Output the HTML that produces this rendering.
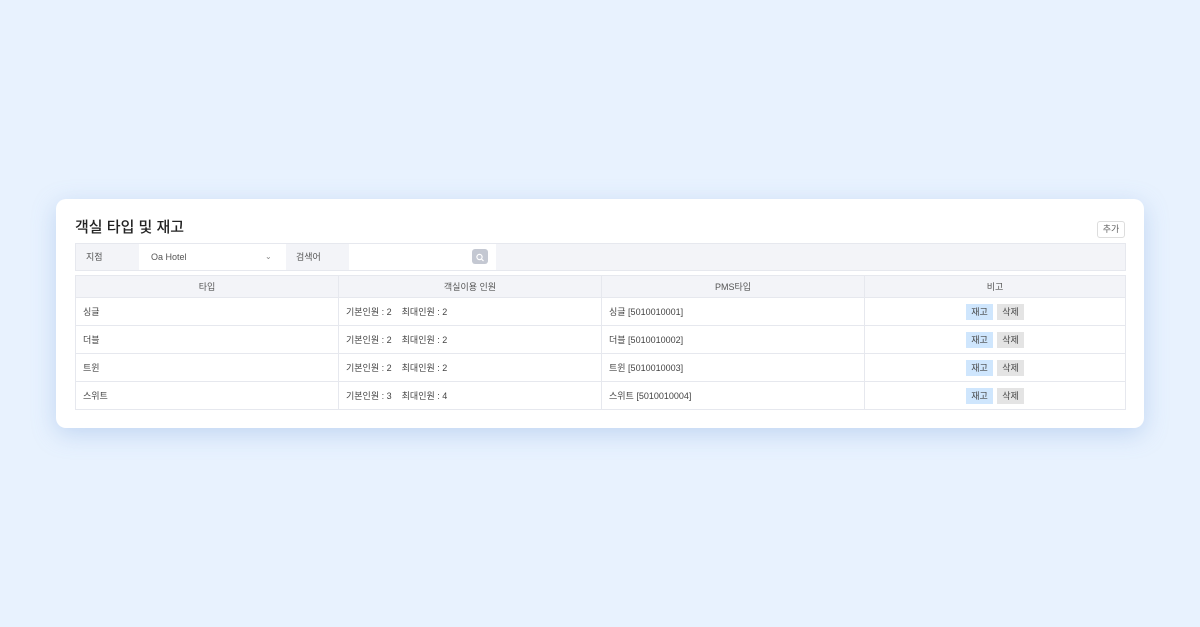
<!DOCTYPE html><html><head><meta charset="utf-8"><style>
*{box-sizing:border-box;margin:0;padding:0}
body{width:1200px;height:627px;background:#e8f2fe;font-family:"Liberation Sans","Noto Sans CJK KR",sans-serif;position:relative;overflow:hidden;color:#333}
.card{position:absolute;left:56px;top:199px;width:1088px;height:229px;background:#fff;border-radius:10px;box-shadow:0 6px 24px rgba(120,160,220,.35)}
h1{position:absolute;left:19px;top:17px;font-size:15px;font-weight:500;color:#222}
.add{position:absolute;left:1041px;top:22px;width:28px;height:17px;border:1px solid #ddd;border-radius:3px;font-size:9px;color:#666;text-align:center;line-height:15px}
.bar{position:absolute;left:19px;top:44px;width:1051px;height:28px;background:#f3f4f8;border:1px solid #e6e8ee;font-size:9px;color:#555}
.bar div{position:absolute;top:0;height:26px;line-height:26px}
table{position:absolute;left:19px;top:76px;width:1051px;border-collapse:collapse;font-size:9px;color:#444}
td,th{border:1px solid #e6e8ee;height:28px;padding:0 7px;text-align:left;font-weight:normal}
th{background:#f3f4f8;height:22px;text-align:center;color:#555}
td.c{text-align:center}
.b{display:inline-block;width:27px;height:16px;line-height:16px;text-align:center;font-size:9px;margin:0 2px}
.b1{background:#cfe6fd}.b2{background:#e4e4e4}
</style></head><body><div class="card">
<h1>객실 타입 및 재고</h1><div class="add">추가</div>
<div class="bar">
<div style="left:10px">지점</div>
<div style="left:63px;width:147px;background:#fff;padding-left:12px">Oa Hotel<span style="position:absolute;left:126px;top:0;color:#888;font-size:8px">⌄</span></div>
<div style="left:220px">검색어</div>
<div style="left:273px;width:147px;background:#fff"><span style="position:absolute;left:123px;top:5px;width:16px;height:15px;background:#c4c8d2;border-radius:3px"><svg width="16" height="15" viewBox="0 0 16 15"><circle cx="7.5" cy="7" r="2.6" fill="none" stroke="#fff" stroke-width="1.2"/><path d="M9.5 9l2 2" stroke="#fff" stroke-width="1.2"/></svg></span></div>
</div>
<table><colgroup><col style="width:263px"><col style="width:263px"><col style="width:263px"><col></colgroup>
<tr><th>타입</th><th>객실이용 인원</th><th>PMS타입</th><th>비고</th></tr>
<tr><td>싱글</td><td>기본인원 : 2 &nbsp;&nbsp; 최대인원 : 2</td><td>싱글 [5010010001]</td><td class="c"><span class="b b1">재고</span><span class="b b2">삭제</span></td></tr>
<tr><td>더블</td><td>기본인원 : 2 &nbsp;&nbsp; 최대인원 : 2</td><td>더블 [5010010002]</td><td class="c"><span class="b b1">재고</span><span class="b b2">삭제</span></td></tr>
<tr><td>트윈</td><td>기본인원 : 2 &nbsp;&nbsp; 최대인원 : 2</td><td>트윈 [5010010003]</td><td class="c"><span class="b b1">재고</span><span class="b b2">삭제</span></td></tr>
<tr><td>스위트</td><td>기본인원 : 3 &nbsp;&nbsp; 최대인원 : 4</td><td>스위트 [5010010004]</td><td class="c"><span class="b b1">재고</span><span class="b b2">삭제</span></td></tr>
</table></div></body></html>
